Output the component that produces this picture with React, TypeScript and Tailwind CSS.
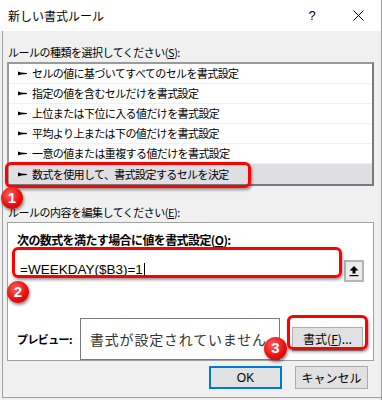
import React from 'react';

const JP = { fontFamily: '"Noto Sans CJK JP", "Noto Sans", sans-serif' };

const RULES = [
  'セルの値に基づいてすべてのセルを書式設定',
  '指定の値を含むセルだけを書式設定',
  '上位または下位に入る値だけを書式設定',
  '平均より上または下の値だけを書式設定',
  '一意の値または重複する値だけを書式設定',
  '数式を使用して、書式設定するセルを決定',
];

const Bullet = () => (
  <svg width="9" height="5" viewBox="0 0 9 5" className="shrink-0">
    <polygon points="0,0.4 3,1.6 9,2 9,3 3,3.4 0,4.6" fill="#000" />
  </svg>
);

const Badge = ({ n, className }: { n: number; className: string }) => (
  <div
    className={`absolute flex items-center justify-center rounded-full bg-[radial-gradient(circle_at_40%_35%,#ff6060,#e81010_55%,#c40000)] shadow-[1px_2px_3px_rgba(0,0,0,0.45)] text-white text-[15px] font-bold ${className}`}
    style={{ fontFamily: '"Liberation Sans", Arial, sans-serif' }}
  >
    {n}
  </div>
);

export default function App() {
  return (
    <div className="relative w-[382px] h-[400px] bg-[#f0f0f0] border-r border-[#9a9a9a] overflow-hidden text-black" style={JP}>
      {/* Title bar */}
      <div className="h-[31px] bg-white flex items-center">
        <span className="pl-[8px] text-[12px] flex-1">新しい書式ルール</span>
        <span className="w-[46px] text-center text-[13px]" style={{ fontFamily: '"Liberation Sans", sans-serif' }}>?</span>
        <span className="w-[46px] flex justify-center">
          <svg width="11" height="11" viewBox="0 0 11 11">
            <path d="M0.5 0.5 L10.5 10.5 M10.5 0.5 L0.5 10.5" stroke="#000" strokeWidth="1" />
          </svg>
        </span>
      </div>

      {/* Body */}
      <div className="ml-[2px] h-[367px] border-l border-b border-[#a0a0a0] flex flex-col pl-[4px] pr-[7px]">
        <div className="pt-[13px] pl-[1px] text-[11px] leading-[16px] tracking-[-0.5px]">
          ルールの種類を選択してください(<span className="underline">S</span>):
        </div>
        <div className="mt-[2px] border-2 border-[#7a7a7a] border-t-[#9a9a9a] border-l-[#9a9a9a] bg-white">
          {RULES.map((r, i) => (
            <div
              key={i}
              className={`h-[20px] flex items-center gap-[5px] pl-[9px] text-[11px] tracking-[-0.6px] border-b border-[#f0f0f0] last:border-b-0 ${i === 5 ? 'bg-[#dfdee3]' : ''}`}
            >
              <Bullet />
              <span>{r}</span>
            </div>
          ))}
        </div>

        <div className="mt-[18px] pl-[1px] text-[11px] leading-[16px] tracking-[-0.5px]">
          ルールの内容を編集してください(<span className="underline">E</span>):
        </div>
        <div className="mt-[2px] h-[139px] border border-[#a0a0a0] bg-white flex flex-col">
          <div className="pt-[9px] pl-[9px] text-[12px] leading-[16px] font-bold tracking-[-0.6px]">
            次の数式を満たす場合に値を書式設定(<span className="underline">O</span>):
          </div>
          <div className="mt-[10px] flex items-center pl-[7px]">
            <div className="w-[325px] h-[25px] flex items-center pl-[5px] text-[13.5px]" style={{ fontFamily: '"Liberation Sans", Arial, sans-serif' }}>
              =WEEKDAY($B3)=1<span className="ml-[1px] w-px h-[15px] bg-black" />
            </div>
            <div className="ml-[4px] w-[20px] h-[22px] border-2 border-[#b4b4b4] bg-[#ececec] flex items-center justify-center">
              <svg width="10" height="12" viewBox="0 0 10 12">
                <polygon points="5,1 9.5,5.5 6.5,5.5 6.5,8.5 3.5,8.5 3.5,5.5 0.5,5.5" fill="#000" />
                <rect x="0.5" y="10" width="9" height="1.2" fill="#000" />
              </svg>
            </div>
          </div>
          <div className="mt-[18px] mx-[3px] h-px bg-[#d4d4d4]" />
          <div className="mt-[17px] flex items-center">
            <span className="pl-[9px] w-[72px] text-[11px] font-bold tracking-[-0.6px]">プレビュー:</span>
            <div className="w-[200px] h-[42px] border border-[#7a7a7a] flex items-center pl-[9px] text-[14px] tracking-[0.8px] text-[#333]">
              書式が設定されていません
            </div>
            <div className="ml-[12px] w-[71px] h-[24px] bg-[#e1e1e1] border border-[#adadad] flex items-center justify-center text-[12px]">
              書式(<span className="underline">F</span>)...
            </div>
          </div>
        </div>

        <div className="mt-[5px] flex justify-end gap-[13px] pr-[6px]">
          <div className="w-[73px] h-[23px] bg-[#e1e1e1] border-2 border-[#0078d7] flex items-center justify-center text-[12px]" style={{ fontFamily: '"Liberation Sans", Arial, sans-serif' }}>
            OK
          </div>
          <div className="w-[73px] h-[23px] bg-[#e1e1e1] border border-[#adadad] flex items-center justify-center text-[12px]">
            キャンセル
          </div>
        </div>
      </div>

      {/* Annotation overlays */}
      <div className="absolute left-[5px] top-[162px] w-[246px] h-[26px] border-[3px] border-[#ff0000] rounded-[6px] shadow-[1px_2px_3px_rgba(0,0,0,0.4)]" />
      <div className="absolute left-[12px] top-[247px] w-[330px] h-[31px] border-[3px] border-[#ff0000] rounded-[6px] shadow-[1px_2px_3px_rgba(0,0,0,0.4)]" />
      <div className="absolute left-[287px] top-[315px] w-[81px] h-[35px] border-[3px] border-[#ff0000] rounded-[6px] shadow-[1px_2px_3px_rgba(0,0,0,0.4)]" />
      <Badge n={1} className="left-[1px] top-[187px] w-[22px] h-[22px]" />
      <Badge n={2} className="left-[7px] top-[281px] w-[22px] h-[22px]" />
      <Badge n={3} className="left-[264px] top-[337px] w-[23px] h-[23px]" />
    </div>
  );
}
